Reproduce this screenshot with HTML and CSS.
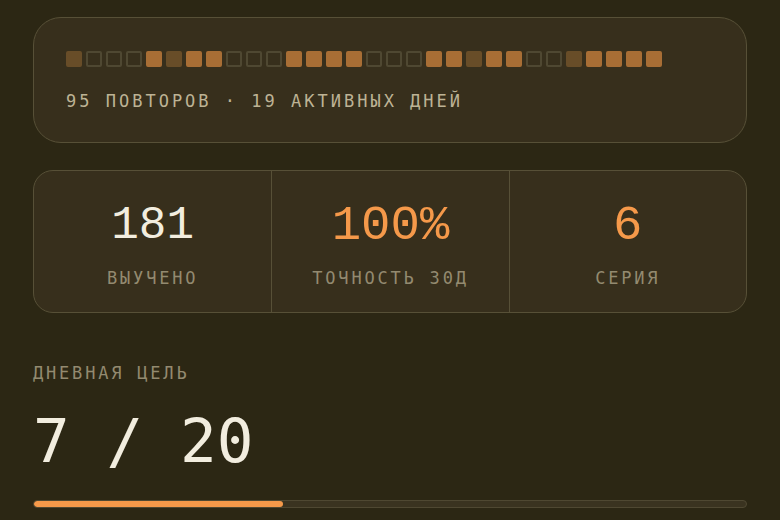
FILE: index.html
```html
<!DOCTYPE html>
<html lang="ru">
<head>
<meta charset="utf-8">
<title>Статистика</title>
<link rel="stylesheet" href="styles.css">
</head>
<body>
<main class="page">
  <section class="card activity">
    <div class="squares">
      <span class="sq dim"></span><span class="sq"></span><span class="sq"></span><span class="sq"></span><span class="sq on"></span><span class="sq dim"></span><span class="sq on"></span><span class="sq on"></span><span class="sq"></span><span class="sq"></span><span class="sq"></span><span class="sq on"></span><span class="sq on"></span><span class="sq on"></span><span class="sq on"></span><span class="sq"></span><span class="sq"></span><span class="sq"></span><span class="sq on"></span><span class="sq on"></span><span class="sq dim"></span><span class="sq on"></span><span class="sq on"></span><span class="sq"></span><span class="sq"></span><span class="sq dim"></span><span class="sq on"></span><span class="sq on"></span><span class="sq on"></span><span class="sq on"></span>
    </div>
    <p class="activity-text">95 повторов · 19 активных дней</p>
  </section>

  <section class="card stats">
    <div class="stat">
      <div class="stat-value">181</div>
      <div class="stat-label">выучено</div>
    </div>
    <div class="stat">
      <div class="stat-value accent">100%</div>
      <div class="stat-label">точность 30д</div>
    </div>
    <div class="stat">
      <div class="stat-value accent">6</div>
      <div class="stat-label">серия</div>
    </div>
  </section>

  <section class="goal">
    <div class="goal-label">дневная цель</div>
    <div class="goal-value">7 / 20</div>
    <div class="bar"><div class="bar-fill" style="width:35%"></div></div>
  </section>
</main>
</body>
</html>
```

FILE: styles.css
```css
html, body {
  margin: 0;
  padding: 0;
  background: #2c2714;
  height: 100%;
  overflow: hidden;
}
body {
  font-family: "DejaVu Sans Mono", "Liberation Mono", monospace;
  color: #f0ebdc;
}
.page {
  padding: 17px 33px 0 33px;
  display: flex;
  flex-direction: column;
}
.card {
  background: #372f1c;
  border: 1.5px solid #575037;
  box-sizing: border-box;
}
.activity {
  border-radius: 28px;
  height: 126px;
  padding: 33px 32px 0 32px;
}
.squares {
  display: flex;
  gap: 4px;
}
.sq {
  width: 16px;
  height: 16px;
  border-radius: 2px;
  box-sizing: border-box;
  border: 2px solid #4f4832;
}
.sq.on {
  background: #a86e35;
  border-color: #a86e35;
}
.sq.dim {
  background: #684d28;
  border-color: #684d28;
}
.activity-text {
  margin: 24px 0 0 0;
  font-size: 17px;
  line-height: 20px;
  letter-spacing: 3px;
  text-transform: uppercase;
  color: #bdb395;
}
.stats {
  margin-top: 27px;
  height: 143px;
  border-radius: 20px;
  display: grid;
  grid-template-columns: 1fr 1fr 1fr;
}
.stat {
  display: flex;
  flex-direction: column;
  align-items: center;
  padding-top: 30px;
}
.stat + .stat {
  border-left: 1.5px solid #575037;
}
.stat-value {
  font-family: "Liberation Mono", monospace;
  font-size: 46px;
  line-height: 50px;
  color: #f2eddf;
}
.stat-value.accent {
  color: #f5994a;
  font-size: 49px;
}
.stat-label {
  margin-top: 17px;
  font-size: 17px;
  line-height: 20px;
  letter-spacing: 2.8px;
  text-transform: uppercase;
  color: #938a70;
}
.goal {
  margin-top: 50px;
}
.goal-label {
  font-size: 17px;
  line-height: 20px;
  letter-spacing: 2.8px;
  text-transform: uppercase;
  color: #938a70;
}
.goal-value {
  margin-top: 26px;
  font-size: 61px;
  line-height: 64px;
  color: #f2eddf;
}
.bar {
  margin-top: 27px;
  height: 8px;
  border-radius: 4px;
  background: #3a3320;
  border: 1.5px solid #4f4832;
  box-sizing: border-box;
  overflow: hidden;
}
.bar-fill {
  height: 100%;
  background: #f5994a;
  border-radius: 3px;
}
```
